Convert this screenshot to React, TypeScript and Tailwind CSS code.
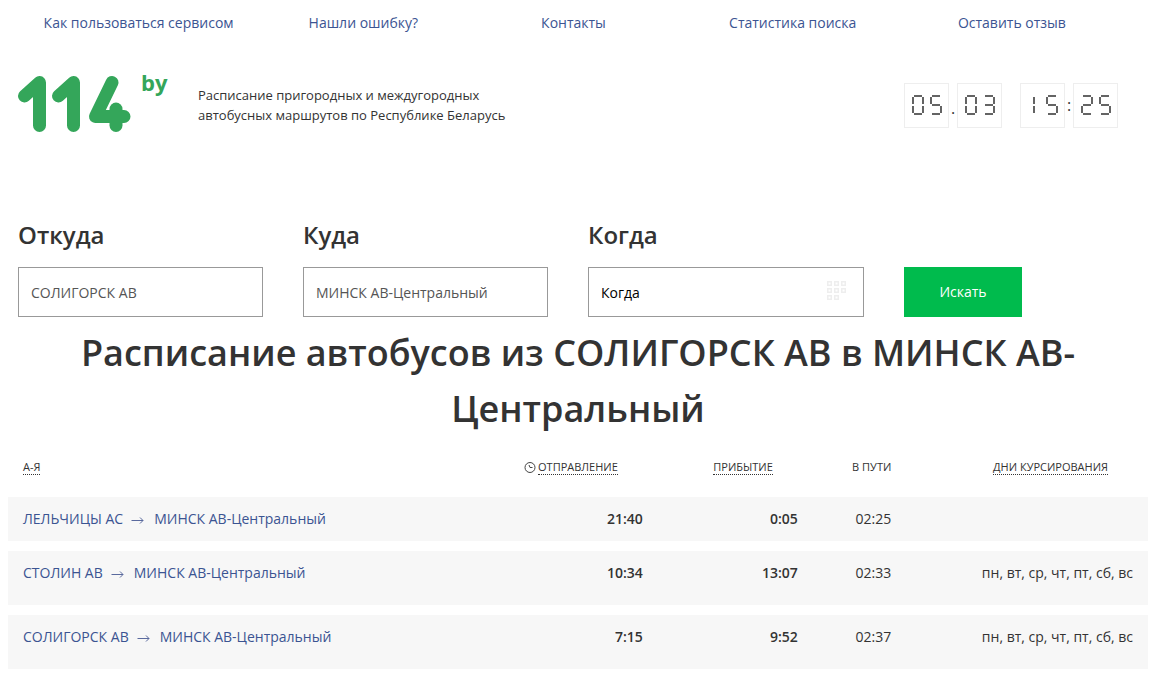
import { useState } from 'react';

const NAV_LINKS = ['Как пользоваться сервисом', 'Нашли ошибку?', 'Контакты', 'Статистика поиска', 'Оставить отзыв'];

const ROUTES = [
  { from: 'ЛЕЛЬЧИЦЫ АС', to: 'МИНСК АВ-Центральный', departure: '21:40', arrival: '0:05', duration: '02:25', days: '' },
  { from: 'СТОЛИН АВ', to: 'МИНСК АВ-Центральный', departure: '10:34', arrival: '13:07', duration: '02:33', days: 'пн, вт, ср, чт, пт, сб, вс' },
  { from: 'СОЛИГОРСК АВ', to: 'МИНСК АВ-Центральный', departure: '7:15', arrival: '9:52', duration: '02:37', days: 'пн, вт, ср, чт, пт, сб, вс' },
];

// Segment order: top, upper left, upper right, middle, lower left, lower right, bottom
const SEGMENTS = [
  [2, 1, 10, 1],
  [1, 2, 1, 9],
  [11, 2, 11, 9],
  [2, 10, 10, 10],
  [1, 11, 1, 18],
  [11, 11, 11, 18],
  [2, 19, 10, 19],
];

const DIGITS: Record<string, number[]> = {
  '0': [0, 1, 2, 4, 5, 6],
  '1': [2, 5],
  '2': [0, 2, 3, 4, 6],
  '3': [0, 2, 3, 5, 6],
  '5': [0, 1, 3, 5, 6],
};

function Digit({ value }: { value: string }) {
  return (
    <svg viewBox={value === '1' ? '5 0 12 20' : '0 0 12 20'} className="h-5 w-3" fill="none" stroke="#222" strokeWidth="1.4">
      {DIGITS[value].map((i) => {
        const [x1, y1, x2, y2] = SEGMENTS[i];
        return <line key={i} x1={x1} y1={y1} x2={x2} y2={y2} />;
      })}
    </svg>
  );
}

function ClockBox({ value }: { value: string }) {
  return (
    <span role="img" aria-label={value} className="flex h-[45px] w-[45px] items-center justify-center gap-1.5 border border-[#eee]">
      {value.split('').map((d, i) => <Digit key={i} value={d} />)}
    </span>
  );
}

function Logo() {
  return (
    <div className="flex w-[152px] shrink-0 items-start">
      <svg viewBox="0 0 123 64" className="h-16 w-[123px] shrink-0" role="img" aria-label="114">
        <g fill="none" stroke="#34a65a" strokeWidth="13" strokeLinecap="round" strokeLinejoin="round">
          <polyline points="6.5,26 21.5,12.5 21.5,55.5" />
          <polyline points="40.5,26 55.5,12.5 55.5,55.5" />
          <polyline points="94,12.5 77.5,46.5 106,46.5" />
          <line x1="98" y1="39" x2="98" y2="55.5" />
        </g>
      </svg>
      <span className="text-[22px] leading-6 font-bold text-[#34a65a]">by</span>
    </div>
  );
}

function CalendarIcon() {
  const cells = [0, 1, 2, 3, 4, 5, 6, 7];
  return (
    <svg viewBox="0 0 19 19" className="pointer-events-none absolute right-[18px] top-3.5 h-[19px] w-[19px]" fill="none" stroke="#eee" strokeWidth="1.5">
      {cells.map((c) => (
        <rect key={c} x={0.75 + (c % 3) * 7} y={0.75 + Math.floor(c / 3) * 7} width="3.5" height="3.5" />
      ))}
    </svg>
  );
}

function ClockIcon() {
  return (
    <svg viewBox="0 0 12 12" className="mr-0.5 inline-block h-3 w-3" fill="none" stroke="#444">
      <circle cx="6" cy="5.5" r="5" />
      <path d="M5 3l1 2.5H8.5" />
    </svg>
  );
}

function Arrow() {
  return (
    <svg viewBox="0 0 13 9" className="ml-2 mr-2.5 inline-block h-[9px] w-[13px]" fill="none" stroke="#5a6a9e">
      <path d="M0.5 4.5h11.5M9 1.5l3 3L9 7.5" />
    </svg>
  );
}

function SortButton({ children }: { children: string }) {
  return <button type="button" className="cursor-pointer border-b border-dotted border-[#333] uppercase leading-[14px]">{children}</button>;
}

export default function App() {
  const [from, setFrom] = useState('СОЛИГОРСК АВ');
  const [to, setTo] = useState('МИНСК АВ-Центральный');
  const [date, setDate] = useState('Когда');

  const inputClass = 'h-[50px] w-full border border-[#999] bg-white px-3 text-sm';

  return (
    <div className="min-h-screen bg-white pl-2 pr-[9px] font-['Open_Sans',sans-serif] text-sm text-[#333]">
      <nav className="grid grid-cols-[241fr_208fr_212fr_226fr_212fr] pl-2.5 pr-[30px] pt-3 text-center leading-[22px] text-[#3b5492]">
        {NAV_LINKS.map((label) => (
          <a key={label} href="#" className="hover:underline">{label}</a>
        ))}
      </nav>

      <header className="flex items-center pl-2.5 pr-[30px] pt-9">
        <Logo />
        <p className="ml-7 pt-1.5 text-[13px] leading-5">
          Расписание пригородных и междугородных
          <br />
          автобусных маршрутов по Республике Беларусь
        </p>
        <div className="ml-auto flex items-center pt-1.5 text-base">
          <ClockBox value="05" />
          <span className="w-2 pt-1.5 text-center">.</span>
          <ClockBox value="03" />
          <span className="w-[18px]" />
          <ClockBox value="15" />
          <span className="w-2 text-center">:</span>
          <ClockBox value="25" />
        </div>
      </header>

      <form className="grid grid-cols-[245fr_245fr_276fr_214fr] items-end gap-x-10 pl-2.5 pr-[30px] pt-[83px]" onSubmit={(e) => e.preventDefault()}>
        <div>
          <label htmlFor="from" className="mb-3.5 block text-2xl leading-9 font-semibold">Откуда</label>
          <input id="from" value={from} onChange={(e) => setFrom(e.target.value)} className={`${inputClass} text-[#555]`} />
        </div>
        <div>
          <label htmlFor="to" className="mb-3.5 block text-2xl leading-9 font-semibold">Куда</label>
          <input id="to" value={to} onChange={(e) => setTo(e.target.value)} className={`${inputClass} text-[#555]`} />
        </div>
        <div>
          <label htmlFor="date" className="mb-3.5 block text-2xl leading-9 font-semibold">Когда</label>
          <div className="relative">
            <input id="date" value={date} onChange={(e) => setDate(e.target.value)} className={`${inputClass} text-black`} />
            <CalendarIcon />
          </div>
        </div>
        <button type="submit" className="h-[50px] w-[118px] cursor-pointer bg-[#00bb4d] text-sm font-medium text-white">Искать</button>
      </form>

      <h1 className="mt-2 text-center text-4xl leading-14 font-semibold">Расписание автобусов из СОЛИГОРСК АВ в МИНСК АВ-Центральный</h1>

      <table className="w-full table-fixed border-separate border-spacing-x-0 border-spacing-y-2.5">
        <colgroup>
          <col className="w-[43.4%]" />
          <col className="w-[13.6%]" />
          <col className="w-[13.6%]" />
          <col className="w-[8.2%]" />
          <col className="w-[21.2%]" />
        </colgroup>
        <thead>
          <tr className="h-10 text-[11px] uppercase">
            <th className="pl-[15px] text-left font-medium"><SortButton>А-Я</SortButton></th>
            <th className="whitespace-nowrap pr-10 text-right font-medium"><ClockIcon /><SortButton>Отправление</SortButton></th>
            <th className="pr-10 text-right font-medium"><SortButton>Прибытие</SortButton></th>
            <th className="pr-[15px] text-right font-medium">В пути</th>
            <th className="pr-10 text-right font-medium"><SortButton>Дни курсирования</SortButton></th>
          </tr>
        </thead>
        <tbody>
          {ROUTES.map((r) => (
            <tr key={r.from} className="bg-[#f7f7f7] align-top leading-5">
              <td className="py-3 pl-[15px] text-[#3b5492]">
                <a href="#" className="hover:underline">{r.from}<Arrow />{r.to}</a>
              </td>
              <td className="py-3 pr-[15px] text-right font-semibold">{r.departure}</td>
              <td className="py-3 pr-[15px] text-right font-semibold">{r.arrival}</td>
              <td className="py-3 pr-[15px] text-right">{r.duration}</td>
              <td className="py-3 pr-[15px] text-right whitespace-nowrap">{r.days && <p className="mb-2.5">{r.days}</p>}</td>
            </tr>
          ))}
        </tbody>
      </table>
    </div>
  );
}
